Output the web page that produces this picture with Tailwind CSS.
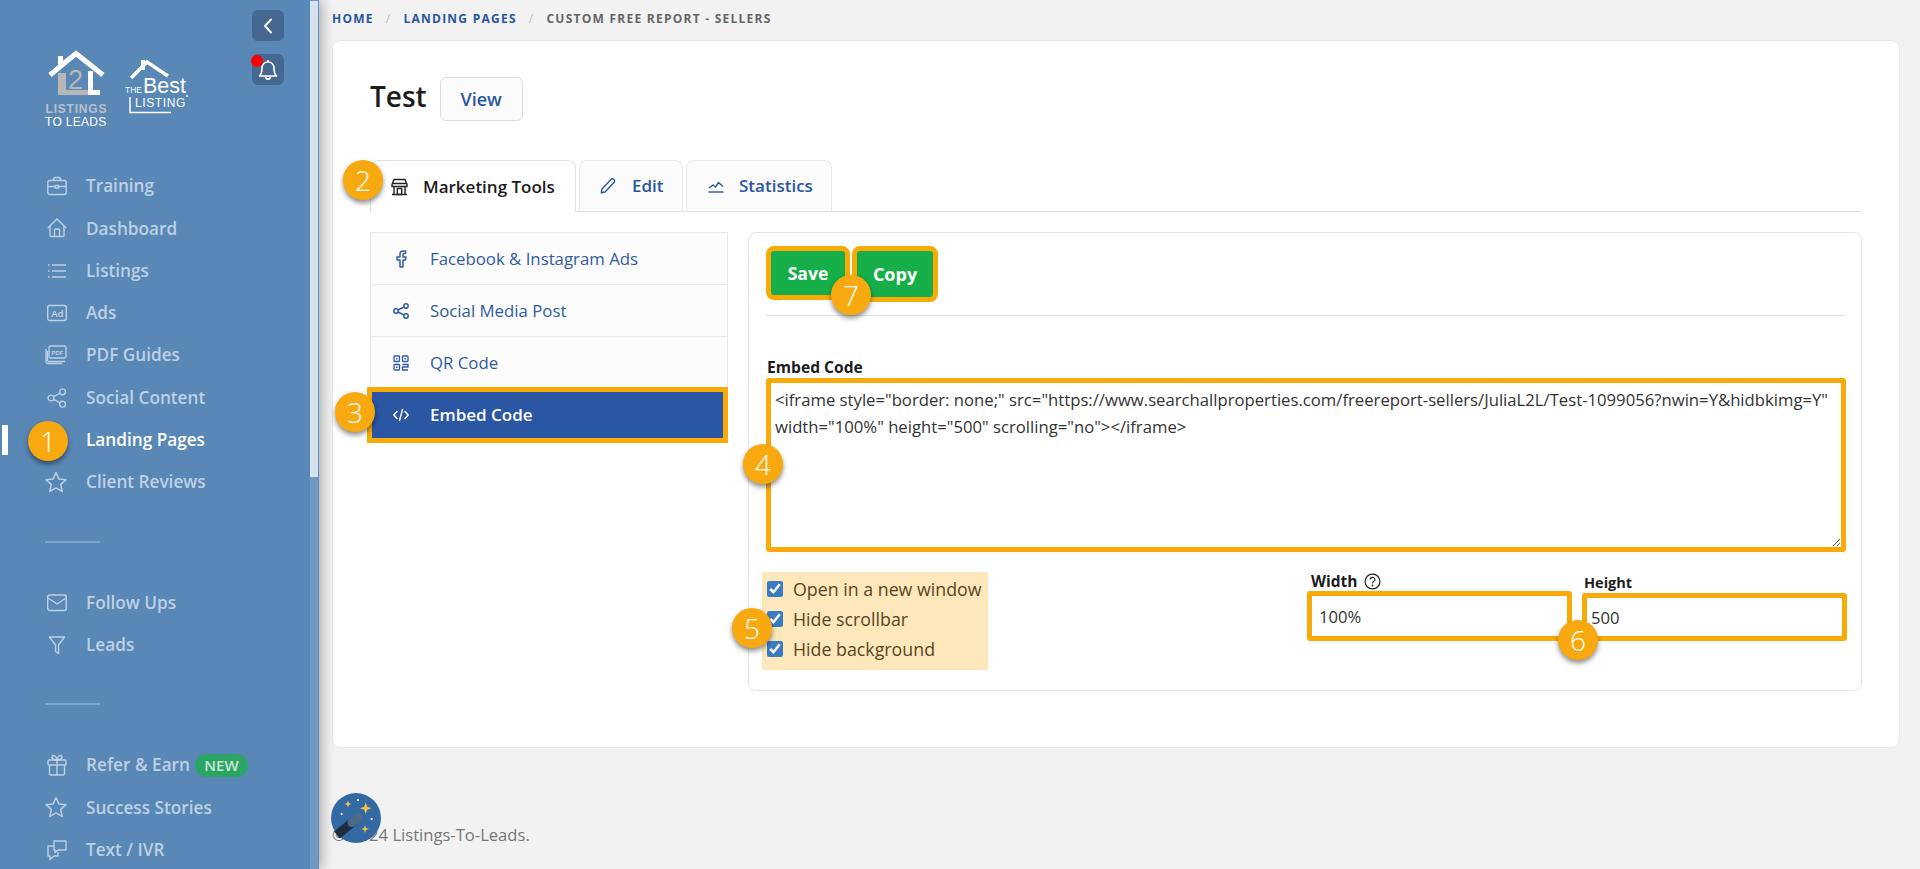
<!DOCTYPE html>
<html lang="en">
  <head>
    <meta charset="UTF-8" />
    <title>Custom Free Report - Sellers</title>
    <script src="https://cdn.jsdelivr.net/npm/@tailwindcss/browser@4"></script>
  </head>
  <body class="bg-[#f2f2f2] font-['Open_Sans',sans-serif] text-[16px]">
    <div class="relative flex h-[869px] w-[1920px] overflow-hidden">
      <!-- Sidebar -->
      <aside class="relative z-10 flex w-[319px] shrink-0 border-r border-[#5f8fc4] bg-[#5987b6] shadow-[3px_0_12px_rgba(0,0,0,0.3)]">
        <div class="w-[310px] shrink-0 text-[#bdd1e5]">
          <div class="flex h-[165px] justify-between">
            <!-- Logos -->
            <div class="flex pl-[44px] pt-[50px]">
              <svg width="150" height="80" viewBox="0 0 150 80">
                <rect x="14" y="6" width="5" height="12" fill="#fff" />
                <path d="M6 25 L32 3.5 L59 25" fill="none" stroke="#fff" stroke-width="5" />
                <path d="M14 23 H22 V40 H44 V45 H14 Z" fill="#b7b7b7" />
                <text x="24" y="39" font-family="Liberation Sans" font-size="27" fill="#b7b7b7">2</text>
                <path d="M44 45 V21 H49 V40 H56 V45 Z" fill="#fff" />
                <text x="1.5" y="63" font-family="Liberation Sans" font-weight="700" font-size="12" letter-spacing="0.8" fill="#b7c1cb">LISTINGS</text>
                <text x="1" y="76" font-family="Liberation Sans" font-size="12" letter-spacing="0.3" fill="#fff">TO LEADS</text>
                <rect x="97" y="10" width="4" height="10" fill="#fff" />
                <path d="M87 28 L103 12 L124 26" fill="none" stroke="#fff" stroke-width="3.5" />
                <text x="81" y="43" font-family="Liberation Sans" font-size="8.5" fill="#fff">THE</text>
                <text x="99" y="43" font-family="Liberation Sans" font-size="21.5" fill="#fff">Best</text>
                <text x="91" y="57" font-family="Liberation Sans" font-size="12" letter-spacing="0.6" fill="#fff">LISTING</text>
                <path d="M86 47 V62.5 H127" fill="none" stroke="#fff" stroke-width="1.5" />
                <circle cx="143" cy="46" r="0.9" fill="#fff" />
              </svg>
            </div>
            <!-- Collapse and notifications -->
            <div class="mr-[26px] flex flex-col gap-[13px] pt-[10px]">
              <button class="flex h-[31px] w-[32px] items-center justify-center rounded-md bg-[#44688f]">
                <svg width="14" height="16" viewBox="0 0 14 16" fill="none" stroke="#fff" stroke-width="2" stroke-linecap="round" stroke-linejoin="round"><path d="M10 1.5 L4 8 L10 14.5" /></svg>
              </button>
              <button class="relative flex h-[31px] w-[32px] items-center justify-center rounded-md bg-[#44688f]">
                <svg width="20" height="22" viewBox="0 0 20 22" fill="none" stroke="#fff" stroke-width="1.6" stroke-linejoin="round"><path d="M1.5 17 C3.5 15 4 13 4 9.5 C4 5.5 6.5 3 10 3 C13.5 3 16 5.5 16 9.5 C16 13 16.5 15 18.5 17 Z" /><path d="M7.5 17.5 C7.5 21 12.5 21 12.5 17.5" /><path d="M10 1 V3" /></svg>
                <span class="absolute left-[-1px] top-[1px] h-[12px] w-[12px] rounded-full bg-[#ff0000]"></span>
              </button>
            </div>
          </div>

          <nav class="text-[17.2px] font-semibold">
            <a class="flex h-[42.3px] items-center pl-[47px]">
              <svg class="mr-[19px] w-5 shrink-0" width="20" height="20" viewBox="0 0 20 20" fill="none" stroke="#bdd1e5" stroke-width="1.4"><rect x="0.8" y="4.5" width="18.4" height="14" rx="2" /><path d="M6.5 4.5 V3 a1.5 1.5 0 0 1 1.5 -1.5 h4 a1.5 1.5 0 0 1 1.5 1.5 V4.5" /><path d="M1 10.5 H8.5 M11.5 10.5 H19" /><rect x="8.5" y="9.5" width="3" height="2.5" /></svg>
              Training
            </a>
            <a class="flex h-[42.3px] items-center pl-[47px]">
              <svg class="mr-[19px] w-5 shrink-0" width="20" height="20" viewBox="0 0 20 20" fill="none" stroke="#bdd1e5" stroke-width="1.4" stroke-linejoin="round"><path d="M0.8 10 L10 1 L19.2 10" /><path d="M3 8 V17.5 a1 1 0 0 0 1 1 H16 a1 1 0 0 0 1 -1 V8" /><path d="M7.5 18.5 V12 a1 1 0 0 1 1 -1 h3 a1 1 0 0 1 1 1 V18.5" /></svg>
              Dashboard
            </a>
            <a class="flex h-[42.3px] items-center pl-[47px]">
              <svg class="mr-[19px] w-5 shrink-0" width="20" height="20" viewBox="0 0 20 20" fill="none" stroke="#bdd1e5" stroke-width="1.3"><path d="M5 4 H19 M5 10 H19 M5 16 H19" /><path d="M1 4 H2.5 M1 10 H2.5 M1 16 H2.5" stroke-width="1.6" /></svg>
              Listings
            </a>
            <a class="flex h-[42.3px] items-center pl-[47px]">
              <svg class="mr-[19px] w-5 shrink-0" width="20" height="20" viewBox="0 0 20 20" fill="none" stroke="#bdd1e5" stroke-width="1.4"><rect x="0.7" y="2.5" width="18.6" height="15" rx="2" /><text x="4" y="14" font-family="Liberation Sans" font-weight="700" font-size="9.5" fill="#bdd1e5" stroke="none">Ad</text></svg>
              Ads
            </a>
            <a class="flex h-[42.3px] items-center pl-[47px]">
              <svg class="-ml-[2px] mr-[19px] w-[22px] shrink-0" width="22" height="20" viewBox="0 0 22 20" fill="none" stroke="#bdd1e5" stroke-width="1.3"><rect x="4" y="1" width="17" height="12" rx="1.5" /><path d="M1 4 V17 a1.5 1.5 0 0 0 1.5 1.5 H17 M2.5 6 V15.5 a1 1 0 0 0 1 1 H20" /><text x="6.5" y="10" font-family="Liberation Sans" font-weight="700" font-size="6" fill="#bdd1e5" stroke="none">PDF</text></svg>
              PDF Guides
            </a>
            <a class="flex h-[42.3px] items-center pl-[47px]">
              <svg class="mr-[19px] w-5 shrink-0" width="20" height="20" viewBox="0 0 20 20" fill="none" stroke="#bdd1e5" stroke-width="1.4"><circle cx="15.5" cy="3.8" r="2.9" /><circle cx="15.5" cy="16.2" r="2.9" /><circle cx="4" cy="10" r="2.9" /><path d="M6.6 8.6 L13 5.2 M6.6 11.4 L13 14.8" /></svg>
              Social Content
            </a>
            <a class="flex h-[42.3px] items-center pl-[47px] text-white">
              <span class="mr-[19px] w-5 shrink-0"></span>
              Landing Pages
            </a>
            <a class="flex h-[42.3px] items-center pl-[47px]">
              <svg class="-ml-[2px] mr-[19px] w-[22px] shrink-0" width="22" height="22" viewBox="0 0 22 22" fill="none" stroke="#bdd1e5" stroke-width="1.5" stroke-linejoin="round"><path d="M11 1.5 L13.9 8 L21 8.7 L15.7 13.4 L17.2 20.4 L11 16.8 L4.8 20.4 L6.3 13.4 L1 8.7 L8.1 8 Z" /></svg>
              Client Reviews
            </a>

            <div class="ml-[45px] mt-[38px] h-[2px] w-[55px] bg-[#7fa3c8]"></div>

            <a class="mt-[38px] flex h-[42.3px] items-center pl-[47px]">
              <svg class="mr-[19px] w-5 shrink-0" width="20" height="20" viewBox="0 0 20 20" fill="none" stroke="#bdd1e5" stroke-width="1.4" stroke-linejoin="round"><rect x="0.7" y="2" width="18.6" height="15.5" rx="2" /><path d="M1 5 L10 11 L19 5" /></svg>
              Follow Ups
            </a>
            <a class="flex h-[42.3px] items-center pl-[47px]">
              <svg class="mr-[19px] w-5 shrink-0" width="20" height="20" viewBox="0 0 20 20" fill="none" stroke="#bdd1e5" stroke-width="1.4" stroke-linejoin="round"><path d="M2.5 2 H17.5 L11.5 10 V18.5 L8.5 16.5 V10 Z" /></svg>
              Leads
            </a>

            <div class="ml-[45px] mt-[37px] h-[2px] w-[55px] bg-[#7fa3c8]"></div>

            <a class="mt-[39px] flex h-[42.3px] items-center pl-[47px]">
              <svg class="mr-[19px] w-5 shrink-0" width="20" height="22" viewBox="0 0 20 22" fill="none" stroke="#bdd1e5" stroke-width="1.4" stroke-linejoin="round"><rect x="1" y="6" width="18" height="5" rx="1" /><path d="M2.5 11 V19.5 a1.5 1.5 0 0 0 1.5 1.5 H16 a1.5 1.5 0 0 0 1.5 -1.5 V11 M10 6 V21" /><path d="M10 6 C7 6 4.5 5 5 2.8 C5.6 0.6 9 1 10 6 C11 1 14.4 0.6 15 2.8 C15.5 5 13 6 10 6 Z" /></svg>
              Refer &amp; Earn
              <span class="ml-[5px] flex h-[23px] w-[53px] items-center justify-center rounded-full bg-[#2ba566] text-[15px] font-semibold text-[#cde6d6]">NEW</span>
            </a>
            <a class="flex h-[42.3px] items-center pl-[47px]">
              <svg class="-ml-[2px] mr-[19px] w-[22px] shrink-0" width="22" height="22" viewBox="0 0 22 22" fill="none" stroke="#bdd1e5" stroke-width="1.5" stroke-linejoin="round"><path d="M11 1.5 L13.9 8 L21 8.7 L15.7 13.4 L17.2 20.4 L11 16.8 L4.8 20.4 L6.3 13.4 L1 8.7 L8.1 8 Z" /></svg>
              Success Stories
            </a>
            <a class="flex h-[42.3px] items-center pl-[47px]">
              <svg class="mr-[19px] w-5 shrink-0" width="20" height="22" viewBox="0 0 20 22" fill="none" stroke="#bdd1e5" stroke-width="1.4" stroke-linejoin="round"><path d="M7 2 H19 V11 H11 L8 13.5 V11 H7 Z" /><path d="M7 7 H1 V17 H3 V20.5 L7 17 H11 V13" /></svg>
              Text / IVR
            </a>
          </nav>
        </div>
        <!-- Sidebar scrollbar -->
        <div class="flex w-[8px] flex-col bg-[#7199c4]">
          <div class="mt-px h-[476px] bg-[#d3e2ee]"></div>
        </div>
      </aside>

      <!-- Main -->
      <main class="min-w-0 flex-1 pl-[13px] pr-[20px]">
        <nav class="flex h-[40px] items-center pb-[2px] text-[12px] font-bold uppercase tracking-[1.25px] text-[#2a56a0]">
          <a>Home</a>
          <span class="mx-[12px] font-normal text-[#bbb]">/</span>
          <a>Landing Pages</a>
          <span class="mx-[12px] font-normal text-[#bbb]">/</span>
          <span class="text-[#666]">Custom Free Report - Sellers</span>
        </nav>

        <div class="rounded-lg border border-[#e8e8e8] bg-white px-[37px] pb-[56px] pt-[36px]">
          <div class="flex items-center gap-[13px]">
            <h1 class="mb-[6px] text-[28px] font-semibold leading-none text-[#1c1c1c]">Test</h1>
            <a class="flex h-[44px] w-[83px] items-center justify-center rounded-md border border-[#dcdcdc] bg-[#fbfbfb] text-[18px] font-semibold text-[#2a56a0]">View</a>
          </div>

          <!-- Tabs -->
          <div class="mt-[39px] flex h-[52px] gap-[3px] border-b border-[#e2e2e2] text-[17px] font-semibold">
            <a class="-mb-px flex w-[206px] items-center rounded-t-lg border border-b-0 border-[#e2e2e2] bg-white pl-[20px] text-[#1c1c1c]">
              <svg class="mr-[15px]" width="17" height="18" viewBox="0 0 17 18" fill="none" stroke="#222" stroke-width="1.4"><path d="M3 1.5 H14 L16 6.5 V8.5 H1 V6.5 Z" /><path d="M1 5.5 H16 M3 8.5 V16.5 M14 8.5 V16.5 M1 16.5 H16" /><rect x="6.3" y="10.5" width="4.4" height="6" /></svg>
              Marketing Tools
            </a>
            <a class="flex w-[104px] items-center rounded-t-lg border border-b-0 border-[#e9e9e9] bg-[#fbfbfb] pl-[20px] text-[#2a56a0]">
              <svg class="mr-[16px]" width="16" height="16" viewBox="0 0 16 16" fill="none" stroke="#2a56a0" stroke-width="1.4" stroke-linejoin="round"><path d="M11 1.5 a2.1 2.1 0 0 1 3 3 L5 14 L1.3 14.8 L2 11 Z" /></svg>
              Edit
            </a>
            <a class="flex w-[146px] items-center rounded-t-lg border border-b-0 border-[#e9e9e9] bg-[#fbfbfb] pl-[21px] text-[#2a56a0]">
              <svg class="mr-[15px]" width="16" height="16" viewBox="0 0 16 16" fill="none" stroke="#2a56a0" stroke-width="1.4" stroke-linejoin="round"><path d="M0.5 14 H15.5" /><path d="M1 10 L5 7 L7.5 9 L10.5 4.5 L15 8.5" /></svg>
              Statistics
            </a>
          </div>

          <div class="mt-[20px] flex gap-[20px]">
            <!-- Left menu -->
            <div class="w-[358px] shrink-0 text-[16.8px] text-[#2f5aa5]">
              <div class="border border-b-0 border-[#e8e8e8] bg-[#fcfcfc]">
                <a class="flex h-[52px] items-center border-b border-[#e8e8e8] pl-[22px]">
                  <svg class="mr-[21px]" width="16" height="18" viewBox="0 0 16 18" fill="none" stroke="#2f5aa5" stroke-width="1.5" stroke-linejoin="round"><path d="M12.5 1 H10 a3 3 0 0 0 -3 3 V7 H4 V10 H7 V17 H10 V10 H12.5 L13 7 H10 V4.5 a1 1 0 0 1 1 -1 H12.5 Z" /></svg>
                  Facebook &amp; Instagram Ads
                </a>
                <a class="flex h-[52px] items-center border-b border-[#e8e8e8] pl-[22px]">
                  <svg class="mr-[21px]" width="16" height="16" viewBox="0 0 16 16" fill="none" stroke="#2f5aa5" stroke-width="1.5"><circle cx="13" cy="3" r="2.2" /><circle cx="13" cy="13" r="2.2" /><circle cx="3" cy="8" r="2.2" /><path d="M5 7 L11 4 M5 9 L11 12" /></svg>
                  Social Media Post
                </a>
                <a class="flex h-[52px] items-center pl-[22px]">
                  <svg class="mr-[21px]" width="16" height="16" viewBox="0 0 16 16" fill="none" stroke="#2f5aa5" stroke-width="1.3"><rect x="1" y="1" width="5.5" height="5.5" rx="0.8" /><rect x="9.5" y="1" width="5.5" height="5.5" rx="0.8" /><rect x="1" y="9.5" width="5.5" height="5.5" rx="0.8" /><path d="M9.5 9.5 H15 V12 H9.5 V15 H15" /><rect x="3" y="3" width="1.5" height="1.5" fill="#2f5aa5" stroke="none" /><rect x="11.5" y="3" width="1.5" height="1.5" fill="#2f5aa5" stroke="none" /><rect x="3" y="11.5" width="1.5" height="1.5" fill="#2f5aa5" stroke="none" /></svg>
                  QR Code
                </a>
              </div>
              <a class="-ml-[3px] -mt-[2px] flex h-[56px] w-[361px] items-center border-[5px] border-[#f8ab07] bg-[#2a56a3] pl-[21px] text-[17px] font-semibold text-white">
                <svg class="mr-[21px]" width="16" height="16" viewBox="0 0 16 16" fill="none" stroke="#fff" stroke-width="1.4" stroke-linecap="round" stroke-linejoin="round"><path d="M4 4.5 L0.8 8 L4 11.5 M12 4.5 L15.2 8 L12 11.5 M9.5 2.5 L6.5 13.5" /></svg>
                Embed Code
              </a>
            </div>

            <!-- Embed panel -->
            <div class="min-w-0 flex-1 rounded-lg border border-[#e5e5e5] pb-[20px] pl-[17px] pr-[14px] pt-[13px]">
              <div class="flex items-start gap-[2px] text-[18px] font-bold text-white">
                <button class="h-[54px] w-[84px] rounded-lg border-[5px] border-[#f8ab07] bg-[#16ae49] pt-px text-[17.5px]">Save</button>
                <button class="h-[56px] w-[86px] rounded-lg border-[5px] border-[#f8ab07] bg-[#16ae49]">Copy</button>
              </div>
              <div class="mr-px mt-[13px] h-px bg-[#e5e5e5]"></div>

              <label class="ml-px mt-[41px] block h-[21px] text-[15.6px] font-bold leading-[20px] text-[#1c1c1c]">Embed Code</label>
              <textarea class="mr-px block h-[174px] w-[1080px] rounded-[3px] border-[5px] border-[#f8ab07] px-[4px] pt-[3px] text-[16.7px] leading-[27px] text-[#333] outline-none" spellcheck="false">&lt;iframe style="border: none;" src="https://www.searchallproperties.com/freereport-sellers/JuliaL2L/Test-1099056?nwin=Y&amp;hidbkimg=Y"
width="100%" height="500" scrolling="no"&gt;&lt;/iframe&gt;</textarea>

              <div class="mt-[20px] flex">
                <div class="-ml-[4px] h-[98px] w-[226px] bg-[#fde8bc] pl-[5px] pt-[2px] text-[17.8px] text-[#5b4423]">
                  <label class="flex h-[30px] items-center gap-[10px]"><input type="checkbox" checked class="h-4 w-4 accent-[#3a7cc4]" />Open in a new window</label>
                  <label class="flex h-[30px] items-center gap-[10px]"><input type="checkbox" checked class="h-4 w-4 accent-[#3a7cc4]" />Hide scrollbar</label>
                  <label class="flex h-[30px] items-center gap-[10px]"><input type="checkbox" checked class="h-4 w-4 accent-[#3a7cc4]" />Hide background</label>
                </div>
                <div class="ml-auto flex gap-[10px]">
                  <div>
                    <label class="flex h-[19px] items-center gap-[7px] pl-[4px] text-[15.5px] font-bold text-[#1c1c1c]">
                      Width
                      <svg width="17" height="17" viewBox="0 0 16 16" fill="none" stroke="#222" stroke-width="1.1"><circle cx="8" cy="8" r="7" /><path d="M5.8 6.2 C5.8 3.4 10.3 3.4 10.3 6.1 C10.3 7.9 8 7.9 8 9.8" /><circle cx="8" cy="11.8" r="0.4" fill="#222" /></svg>
                    </label>
                    <input value="100%" class="block h-[50px] w-[265px] rounded-[3px] border-[5px] border-[#f8ab07] pl-[7px] text-[16.6px] text-[#333] outline-none" />
                  </div>
                  <div>
                    <label class="flex h-[21px] items-center pl-[2px] text-[14.5px] font-bold text-[#1c1c1c]">Height</label>
                    <input value="500" class="block h-[48px] w-[265px] rounded-[3px] border-[5px] border-[#f8ab07] pl-[4px] text-[16.6px] text-[#333] outline-none" />
                  </div>
                </div>
              </div>
            </div>
          </div>
        </div>

        <footer class="mt-[75px] text-[16.6px] text-[#777]">© 2024 Listings-To-Leads.</footer>
      </main>

      <!-- Active page marker -->
      <span class="absolute left-[2px] top-[425px] z-20 h-[30px] w-[6px] bg-white"></span>

      <!-- Helper wand -->
      <svg class="absolute left-[331px] top-[793px] z-20" width="50" height="50" viewBox="0 0 50 50">
        <circle cx="25" cy="25" r="25" fill="#336aa3" />
        <path d="M6 42 L23 28" stroke="#1f2d40" stroke-width="9" />
        <path d="M21 29.5 L27 24.5" stroke="#4b6b88" stroke-width="9" stroke-linecap="round" />
        <path d="M34.7 9.5 L36.2 13.8 L40.5 15.3 L36.2 16.8 L34.7 21 L33.2 16.8 L29 15.3 L33.2 13.8 Z" fill="#f3c14b" />
        <path d="M17 7.5 L18 10 L20.5 11 L18 12 L17 14.5 L16 12 L13.5 11 L16 10 Z" fill="#f3c14b" />
        <path d="M34 32 L35 35 L38 36 L35 37 L34 40 L33 37 L30 36 L33 35 Z" fill="#f3c14b" />
        <circle cx="27" cy="7" r="1.1" fill="#fff" /><circle cx="10.7" cy="21" r="1.1" fill="#fff" /><circle cx="40.7" cy="26" r="1.1" fill="#fff" />
      </svg>

      <!-- Numbered callouts -->
      <span class="absolute left-[28px] top-[421px] z-30 flex h-[40px] w-[40px] items-center justify-center rounded-full bg-[#f8a90f] text-[28px] font-light text-white shadow-[0_3px_5px_rgba(0,0,0,0.45)]">1</span>
      <span class="absolute left-[343px] top-[160px] z-30 flex h-[40px] w-[40px] items-center justify-center rounded-full bg-[#f8a90f] text-[28px] font-light text-white shadow-[0_3px_5px_rgba(0,0,0,0.45)]">2</span>
      <span class="absolute left-[335px] top-[392px] z-30 flex h-[40px] w-[40px] items-center justify-center rounded-full bg-[#f8a90f] text-[28px] font-light text-white shadow-[0_3px_5px_rgba(0,0,0,0.45)]">3</span>
      <span class="absolute left-[743px] top-[444px] z-30 flex h-[40px] w-[40px] items-center justify-center rounded-full bg-[#f8a90f] text-[28px] font-light text-white shadow-[0_3px_5px_rgba(0,0,0,0.45)]">4</span>
      <span class="absolute left-[732px] top-[608px] z-30 flex h-[40px] w-[40px] items-center justify-center rounded-full bg-[#f8a90f] text-[28px] font-light text-white shadow-[0_3px_5px_rgba(0,0,0,0.45)]">5</span>
      <span class="absolute left-[1558px] top-[620px] z-30 flex h-[40px] w-[40px] items-center justify-center rounded-full bg-[#f8a90f] text-[28px] font-light text-white shadow-[0_3px_5px_rgba(0,0,0,0.45)]">6</span>
      <span class="absolute left-[831px] top-[275px] z-30 flex h-[40px] w-[40px] items-center justify-center rounded-full bg-[#f8a90f] text-[28px] font-light text-white shadow-[0_3px_5px_rgba(0,0,0,0.45)]">7</span>
    </div>
  </body>
</html>
